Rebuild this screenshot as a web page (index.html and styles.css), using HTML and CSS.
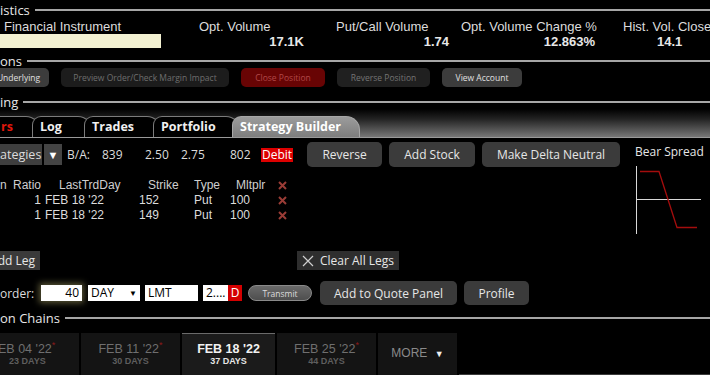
FILE: index.html
```html
<!DOCTYPE html>
<html lang="en">
<head>
    <meta charset="UTF-8">
    <meta name="viewport" content="width=device-width, initial-scale=1.0">
    <title>Option Trader</title>
    <link rel="stylesheet" href="styles.css">
</head>
<body>

<div class="window">

    <!-- Statistics -->
    <div class="sec-title stats-title"><span>istics</span></div>
    <div class="stats-grid">
        <div class="stat-head c1">Financial Instrument</div>
        <div class="stat-head c2">Opt. Volume</div>
        <div class="stat-head c3">Put/Call Volume</div>
        <div class="stat-head c4">Opt. Volume Change %</div>
        <div class="stat-head c5">Hist. Vol. Close %</div>
        <div class="stat-val c1"><div class="instrument-box"></div></div>
        <div class="stat-val c2">17.1K</div>
        <div class="stat-val c3">1.74</div>
        <div class="stat-val c4">12.863%</div>
        <div class="stat-val c5">14.1</div>
    </div>

    <!-- Actions -->
    <div class="sec-title actions-title"><span>ons</span></div>
    <div class="action-row">
        <button class="act-btn act-under">Underlying</button>
        <button class="act-btn act-off act-preview">Preview Order/Check Margin Impact</button>
        <button class="act-btn act-close">Close Position</button>
        <button class="act-btn act-off act-reverse">Reverse Position</button>
        <button class="act-btn act-account">View Account</button>
    </div>

    <!-- Trading -->
    <div class="sec-title trading-title"><span>ing</span></div>
    <div class="tab-bar">
        <div class="tab tab-orders">rs</div>
        <div class="tab tab-log">Log</div>
        <div class="tab tab-trades">Trades</div>
        <div class="tab tab-portfolio">Portfolio</div>
        <div class="tab tab-active">Strategy Builder</div>
    </div>

    <div class="builder">
        <div class="builder-main">
            <div class="strategy-row">
                <div class="strat-select">ategies</div>
                <div class="strat-arrow">&#9660;</div>
                <span class="ba ba-label">B/A:</span>
                <span class="ba ba-size">839</span>
                <span class="ba ba-bid">2.50</span>
                <span class="ba ba-ask">2.75</span>
                <span class="ba ba-size2">802</span>
                <span class="debit">Debit</span>
                <button class="btn btn-reverse">Reverse</button>
                <button class="btn btn-stock">Add Stock</button>
                <button class="btn btn-delta">Make Delta Neutral</button>
            </div>

            <table class="legs">
                <thead>
                    <tr>
                        <th class="l-act">n</th>
                        <th class="l-ratio">Ratio</th>
                        <th class="l-day">LastTrdDay</th>
                        <th class="l-strike">Strike</th>
                        <th class="l-type">Type</th>
                        <th class="l-mult">Mltplr</th>
                        <th class="l-del"><svg class="del-x" width="9" height="9" viewBox="0 0 9 9"><path d="M1 1 L8 8 M8 1 L1 8"/></svg></th>
                    </tr>
                </thead>
                <tbody>
                    <tr>
                        <td></td>
                        <td class="l-ratio">1</td>
                        <td class="l-day">FEB 18 '22</td>
                        <td class="l-strike">152</td>
                        <td class="l-type">Put</td>
                        <td class="l-mult">100</td>
                        <td class="l-del"><svg class="del-x" width="9" height="9" viewBox="0 0 9 9"><path d="M1 1 L8 8 M8 1 L1 8"/></svg></td>
                    </tr>
                    <tr>
                        <td></td>
                        <td class="l-ratio">1</td>
                        <td class="l-day">FEB 18 '22</td>
                        <td class="l-strike">149</td>
                        <td class="l-type">Put</td>
                        <td class="l-mult">100</td>
                        <td class="l-del"><svg class="del-x" width="9" height="9" viewBox="0 0 9 9"><path d="M1 1 L8 8 M8 1 L1 8"/></svg></td>
                    </tr>
                </tbody>
            </table>
        </div>

        <div class="payoff">
            <div class="payoff-title">Bear Spread</div>
            <svg class="payoff-chart" width="70" height="68" viewBox="0 0 70 68">
                <line x1="1.5" y1="0" x2="1.5" y2="68" stroke="#d8d8d8" stroke-width="1"/>
                <line x1="1" y1="33.5" x2="66" y2="33.5" stroke="#d8d8d8" stroke-width="1"/>
                <polyline points="5,5.5 24,5.5 42,61.5 62,61.5" fill="none" stroke="#a30d0d" stroke-width="1.3"/>
            </svg>
        </div>
    </div>

    <div class="leg-tools">
        <button class="btn btn-leg">dd Leg</button>
        <button class="btn-clear">
            <svg width="12" height="12" viewBox="0 0 12 12"><path d="M1 1 L11 11 M11 1 L1 11" stroke="#cfcfcf" stroke-width="1.2"/></svg>
            Clear All Legs
        </button>
    </div>

    <div class="order-row">
        <span class="order-label">order:</span>
        <div class="field qty">40</div>
        <div class="field tif">DAY <span class="caret">&#9660;</span></div>
        <div class="field otype">LMT</div>
        <div class="field price">2....<span class="side">D</span></div>
        <button class="transmit">Transmit</button>
        <button class="btn btn-quote">Add to Quote Panel</button>
        <button class="btn btn-profile">Profile</button>
    </div>

    <!-- Option Chains -->
    <div class="sec-title chains-title"><span>on Chains</span></div>
    <div class="expiries">
        <div class="exp exp-first">
            <div class="exp-date">EB 04 '22<sup>*</sup></div>
            <div class="exp-days">23 DAYS</div>
        </div>
        <div class="exp">
            <div class="exp-date">FEB 11 '22<sup>*</sup></div>
            <div class="exp-days">30 DAYS</div>
        </div>
        <div class="exp exp-active">
            <div class="exp-date">FEB 18 '22</div>
            <div class="exp-days">37 DAYS</div>
        </div>
        <div class="exp">
            <div class="exp-date">FEB 25 '22<sup>*</sup></div>
            <div class="exp-days">44 DAYS</div>
        </div>
        <div class="exp exp-more">MORE <span class="more-caret">&#9660;</span></div>
        <div class="exp-rest"></div>
    </div>

</div>

</body>
</html>
```

FILE: styles.css
```css
/* General Styles */
body {
    margin: 0;
    padding: 0;
    background-color: #000;
    color: #dcdcdc;
    font-family: "Open Sans", "Liberation Sans", sans-serif;
    font-size: 12px;
    overflow: hidden;
}
button {
    font-family: inherit;
    cursor: pointer;
}
.window {
    width: 710px;
    height: 375px;
    overflow: hidden;
}

/* Section titles with rule */
.sec-title {
    display: flex;
    align-items: center;
    height: 14px;
    line-height: 14px;
    font-size: 13px;
    color: #e6e6e6;
    white-space: nowrap;
}
.sec-title::after {
    content: "";
    flex: 1;
    height: 2px;
    background-color: #a6a6a6;
    margin-left: 5px;
}
.stats-title {
    height: 16px;
    margin-top: 2px;
}
.actions-title {
    margin-top: 5px;
}
.trading-title {
    margin-top: 8px;
}
.chains-title {
    margin-top: 6px;
}

/* Statistics */
.stats-grid {
    display: grid;
    grid-template-columns: 197px 137px 125px 162px 89px;
    grid-template-rows: 15px 15px;
    margin-top: 1px;
    font-family: "Liberation Sans", sans-serif;
    font-size: 13px;
}
.stat-head {
    color: #dcdcdc;
    padding-left: 2px;
    white-space: nowrap;
    overflow: hidden;
    line-height: 15px;
}
.stat-head.c1 {
    padding-left: 4px;
}
.stat-val {
    font-weight: bold;
    color: #e8e8e8;
    text-align: right;
    line-height: 15px;
    white-space: nowrap;
}
.stat-val.c2 { padding-right: 30px; }
.stat-val.c3 { padding-right: 10px; }
.stat-val.c4 { padding-right: 26px; }
.stat-val.c5 {
    text-align: left;
    padding-left: 36px;
}
.instrument-box {
    width: 161px;
    height: 14px;
    background-color: #f3f1d2;
}

/* Actions */
.action-row {
    display: flex;
    gap: 12px;
}
.act-btn {
    height: 19px;
    border: none;
    border-radius: 5px;
    background-color: #3c3c3c;
    color: #e0e0e0;
    font-size: 8.5px;
    padding: 0;
    white-space: nowrap;
}
.act-under {
    width: 61px;
    margin-left: -12px;
}
.act-off {
    background-color: #1c1c1c;
    color: #6e6e6e;
}
.act-preview { width: 168px; }
.act-close {
    width: 84px;
    background-color: #680404;
    color: #b24848;
}
.act-reverse {
    width: 93px;
    color: #747474;
    background-color: #202020;
}
.act-account { width: 80px; }

/* Tabs */
.tab-bar {
    display: flex;
    align-items: flex-end;
    height: 28px;
    background: linear-gradient(to bottom, #000 0%, #222 35%, #777 100%);
    border-bottom: 1px solid #9a9a9a;
}
.tab {
    position: relative;
    box-sizing: border-box;
    height: 21px;
    line-height: 20px;
    background-color: #000;
    border: 1px solid #7c7c7c;
    border-bottom: none;
    border-radius: 9px 14px 0 0;
    font-weight: bold;
    font-size: 12.5px;
    color: #f0f0f0;
    padding-left: 7px;
    margin-left: -8px;
    white-space: nowrap;
}
.tab-orders {
    width: 60px;
    margin-left: -20px;
    padding-left: 20px;
    color: #e0180c;
}
.tab-log { width: 60px; }
.tab-trades { width: 77px; }
.tab-portfolio { width: 87px; }
.tab-active {
    width: 128px;
    background: linear-gradient(to bottom, #9c9c9c, #7e7e7e);
    border-color: #a8a8a8;
    color: #fff;
}

/* Strategy builder */
.builder {
    display: flex;
    justify-content: space-between;
    height: 96px;
}
.strategy-row {
    display: flex;
    align-items: center;
    height: 25px;
    margin-top: 4px;
    white-space: nowrap;
}
.strat-select {
    width: 42px;
    height: 21px;
    line-height: 21px;
    background-color: #3e3e3e;
    text-align: right;
    padding-right: 6px;
    box-sizing: border-box;
    overflow: hidden;
    font-size: 12.5px;
}
.strat-arrow {
    width: 18px;
    height: 21px;
    line-height: 21px;
    margin-left: 2px;
    text-align: center;
    background-color: #444;
    color: #fff;
    font-size: 11px;
}
.ba {
    display: inline-block;
}
.ba-label { margin-left: 5px; width: 35px; }
.ba-size { width: 43px; }
.ba-bid { width: 36px; }
.ba-ask { width: 49px; }
.ba-size2 { width: 31px; }
.debit {
    width: 32px;
    height: 14px;
    line-height: 14px;
    text-align: center;
    background-color: #dd0000;
    color: #fff;
}
.btn {
    height: 25px;
    border: none;
    border-radius: 5px;
    background-color: #3b3b3b;
    color: #e6e6e6;
    font-size: 12px;
    padding: 0;
    white-space: nowrap;
}
.btn-reverse {
    width: 75px;
    margin-left: 14px;
}
.btn-stock {
    width: 86px;
    margin-left: 7px;
}
.btn-delta {
    width: 138px;
    margin-left: 7px;
}

/* Legs */
.legs {
    border-collapse: collapse;
    table-layout: fixed;
    width: 290px;
    margin-top: 10px;
    font-family: "Liberation Sans", sans-serif;
    font-size: 12px;
}
.legs th, .legs td {
    box-sizing: border-box;
    padding: 0;
    height: 15px;
    line-height: 15px;
    font-weight: normal;
    white-space: nowrap;
    text-align: left;
}
.legs th {
    color: #cfcfcf;
    height: 16px;
}
.l-act { width: 13px; }
.legs .l-ratio { width: 28px; text-align: right; }
.l-day { width: 98px; padding-left: 4px !important; }
th.l-day { padding-left: 18px !important; }
.l-strike { width: 55px; }
th.l-strike { padding-left: 9px !important; }
.l-type { width: 36px; }
.l-mult { width: 48px; }
th.l-mult { padding-left: 6px !important; }
.l-del { width: 12px; }
.del-x {
    display: block;
    stroke: #9a3c36;
    stroke-width: 2;
}

/* Payoff diagram */
.payoff {
    width: 75px;
    margin-top: 6px;
}
.payoff-title {
    font-size: 12px;
    line-height: 15px;
    color: #e6e6e6;
    white-space: nowrap;
}
.payoff-chart {
    display: block;
    margin-top: 7px;
}

/* Leg tools */
.leg-tools {
    display: flex;
    margin-top: 17px;
}
.btn-leg {
    width: 52px;
    height: 19px;
    margin-left: -12px;
    border-radius: 0;
    background-color: #3a3a3a;
    text-align: right;
    padding-right: 5px;
}
.btn-clear {
    display: flex;
    align-items: center;
    gap: 6px;
    height: 19px;
    margin-left: 257px;
    padding: 0 5px;
    border: none;
    background-color: #2e2e2e;
    color: #e6e6e6;
    font-size: 12px;
}

/* Order entry */
.order-row {
    display: flex;
    align-items: center;
    height: 24px;
    margin-top: 11px;
    white-space: nowrap;
}
.order-label { width: 41px; }
.field {
    height: 16px;
    line-height: 16px;
    background-color: #fff;
    color: #000;
    font-size: 12px;
    box-sizing: border-box;
    padding: 0 3px;
}
.qty {
    width: 41px;
    text-align: right;
    box-shadow: 0 0 6px 2px rgba(200, 190, 120, 0.45);
}
.tif {
    width: 52px;
    margin-left: 6px;
    display: flex;
    justify-content: space-between;
}
.caret { font-size: 8px; }
.otype {
    width: 53px;
    margin-left: 5px;
}
.price {
    width: 39px;
    margin-left: 5px;
    display: flex;
    padding-right: 0;
}
.side {
    margin-left: auto;
    width: 14px;
    text-align: center;
    background-color: #d40000;
    color: #fff;
}
.transmit {
    width: 64px;
    height: 16px;
    margin-left: 6px;
    border: 1px solid #8a8a8a;
    border-radius: 8px;
    background: linear-gradient(to bottom, #6a6a6a, #4e4e4e);
    color: #dcdcdc;
    font-size: 8.5px;
    padding: 0;
}
.btn-quote {
    width: 137px;
    height: 24px;
    margin-left: 8px;
}
.btn-profile {
    width: 65px;
    height: 24px;
    margin-left: 7px;
}

/* Expiry tabs */
.expiries {
    display: flex;
    gap: 2px;
    height: 42px;
    margin-top: 8px;
    font-family: "Liberation Sans", sans-serif;
}
.exp {
    width: 99px;
    background-color: #141414;
    color: #6f6f6f;
    text-align: center;
    box-sizing: border-box;
    padding-top: 9px;
}
.exp-first {
    width: 79px;
    text-align: left;
}
.exp-first .exp-date { margin-left: -2px; }
.exp-first .exp-days { padding-left: 9px; }
.exp-date {
    font-size: 12.5px;
    line-height: 14px;
    white-space: nowrap;
}
.exp-date sup {
    color: #8c1a1a;
    font-size: 9px;
    line-height: 0;
}
.exp-days {
    font-size: 9px;
    font-weight: bold;
    line-height: 11px;
    color: #5e5e5e;
}
.exp-active {
    width: 93px;
    background-color: #1b1b1b;
    border-top: 1px solid #6a6a6a;
    padding-top: 8px;
    color: #f2f2f2;
}
.exp-active .exp-date { font-weight: bold; }
.exp-active .exp-days { color: #e6e6e6; }
.exp-more {
    width: 79px;
    padding-top: 13px;
    font-size: 12px;
    color: #8a8a8a;
}
.more-caret {
    color: #eee;
    font-size: 9px;
    margin-left: 4px;
}
.exp-rest {
    flex: 1;
    border-bottom: 1px solid #3a3a3a;
}
```
